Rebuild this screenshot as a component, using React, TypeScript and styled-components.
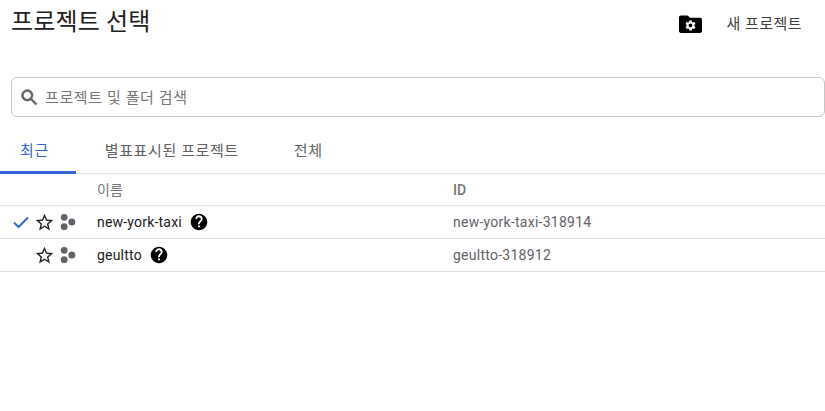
import React from "react";
import styled, { createGlobalStyle } from "styled-components";

const Global = createGlobalStyle`
  html, body { margin: 0; padding: 0; background: #fff; }
  body { font-family: Roboto, "Noto Sans CJK KR", sans-serif; overflow: hidden; }
`;

const Page = styled.div`
  width: 825px;
  height: 411px;
  display: flex;
  flex-direction: column;
  overflow: hidden;
`;

const Header = styled.header`
  height: 77px;
  display: flex;
  align-items: flex-start;
  justify-content: space-between;
  padding: 0 23px 0 11px;
`;

const Title = styled.h1`
  margin: 6px 0 0;
  font-size: 24px;
  line-height: 32px;
  font-weight: 400;
  letter-spacing: 0.15px;
  color: #202124;
`;

const Actions = styled.div`
  display: flex;
  align-items: center;
  height: 48px;
  color: #202124;
`;

const NewProject = styled.span`
  margin-left: 25px;
  padding-bottom: 3px;
  font-size: 15px;
  letter-spacing: 0.45px;
  color: #3c4043;
`;

const Search = styled.div`
  height: 38px;
  margin: 0 0 0 11px;
  display: flex;
  align-items: center;
  gap: 5px;
  padding-left: 7px;
  border: 1px solid #c6c6c6;
  border-radius: 6px;
  color: #757575;
`;

const Placeholder = styled.span`
  padding-bottom: 2px;
  font-size: 15px;
  letter-spacing: 0.6px;
`;

const Tabs = styled.nav`
  margin-top: 17px;
  height: 39px;
  display: flex;
  border-bottom: 1px solid #e0e0e0;
`;

const Tab = styled.div<{ $active?: boolean; $left: number; $right: number }>`
  padding: 7px ${(p) => p.$right}px 0 ${(p) => p.$left}px;
  font-size: 15px;
  letter-spacing: 0.6px;
  line-height: 20px;
  box-sizing: border-box;
  height: 40px;
  color: ${(p) => (p.$active ? "#3367d6" : "#616161")};
  border-bottom: 3px solid ${(p) => (p.$active ? "#3367d6" : "transparent")};
`;

const Row = styled.div<{ $h: number }>`
  height: ${(p) => p.$h}px;
  display: grid;
  grid-template-columns: 97px 356px 1fr;
  align-items: center;
  border-bottom: 1px solid #e0e0e0;
  font-size: 14px;
  letter-spacing: 0.25px;
`;

const NameHead = styled.div`
  padding-bottom: 2px;
  font-size: 14px;
  letter-spacing: 0;
  color: #757575;
`;

const IdHead = styled.div`
  font-size: 14px;
  letter-spacing: 0;
  font-weight: 500;
  color: #757575;
`;

const IconCell = styled.div`
  display: flex;
  align-items: center;
  padding-left: 12px;
`;

const CheckSlot = styled.div`
  width: 18px;
  height: 18px;
  color: #3367d6;
  margin-right: 4px;
`;

const NameCell = styled.div`
  display: flex;
  align-items: center;
  gap: 8px;
  color: #202124;
  letter-spacing: 0.2px;
`;

const IdCell = styled.div`
  color: #5f6368;
`;

const Check = () => (
  <svg width="18" height="18" viewBox="0 0 18 18" fill="none" stroke="currentColor" strokeWidth="2">
    <path d="M2 9.5 L6.5 14 L16 4.5" />
  </svg>
);

const Star = () => (
  <svg width="21" height="21" viewBox="0 0 24 24" fill="#202124" style={{ marginRight: 5 }}>
    <path d="M22 9.24l-7.19-.62L12 2 9.19 8.63 2 9.24l5.46 4.73L5.82 21 12 17.27 18.18 21l-1.63-7.03L22 9.24zM12 15.4l-3.76 2.27 1-4.28-3.32-2.88 4.38-.38L12 6.1l1.71 4.04 4.38.38-3.32 2.88 1 4.28L12 15.4z" />
  </svg>
);

const Nodes = () => (
  <svg width="16" height="18" viewBox="0 0 16 18" fill="#5f6368">
    <circle cx="4.2" cy="4.3" r="3.4" />
    <circle cx="4.2" cy="13.7" r="3.4" />
    <circle cx="11.8" cy="8.9" r="3.5" />
  </svg>
);

const Help = () => (
  <svg width="18" height="18" viewBox="0 0 24 24" fill="#000">
    <path d="M12 1C5.900 1 1 5.900 1 12s4.900 11 11 11 11-4.900 11-11S18.100 1 12 1zm1.200 18h-2.500v-2.500h2.500V19zm2.500-8.300l-1.100 1.100c-.9.900-1.400 1.600-1.400 3.200h-2.500v-.6c0-1.200.5-2.300 1.400-3.200l1.500-1.500c.4-.4.700-1 .7-1.700 0-1.300-1.100-2.400-2.400-2.400S9.500 6.700 9.500 8H7.100c0-2.700 2.200-4.900 4.900-4.900s4.900 2.200 4.900 4.900c0 1.100-.5 2-1.200 2.700z" />
  </svg>
);

const FolderGear = () => (
  <svg width="23" height="18" viewBox="0 0 24 19" preserveAspectRatio="none">
    <path d="M2 0.500h7l2.600 2.500H22c1.100 0 2 .9 2 2v12c0 1.100-.9 2-2 2H2c-1.100 0-2-.9-2-2V2.500C0 1.400.9.500 2 .500z" fill="#000" />
    <g transform="translate(5.400 4.400) scale(0.55)">
      <path
        fill="#fff"
        d="M19.140 12.940c.04-.3.06-.61.06-.94 0-.32-.02-.64-.07-.94l2.030-1.580c.18-.14.23-.41.12-.61l-1.920-3.320c-.12-.22-.37-.29-.59-.22l-2.390.96c-.5-.38-1.030-.7-1.620-.94l-.36-2.540c-.04-.24-.24-.41-.48-.41h-3.840c-.24 0-.43.17-.47.41l-.36 2.540c-.59.24-1.130.57-1.620.94l-2.390-.96c-.22-.08-.47 0-.59.22L2.740 8.870c-.12.21-.08.47.12.61l2.030 1.580c-.05.3-.09.63-.09.94s.02.64.07.94l-2.030 1.580c-.18.14-.23.41-.12.61l1.920 3.320c.12.22.37.29.59.22l2.390-.96c.5.38 1.030.7 1.620.94l.36 2.540c.05.24.24.41.48.41h3.840c.24 0 .44-.17.47-.41l.36-2.540c.59-.24 1.130-.56 1.620-.94l2.390.96c.22.08.47 0 .59-.22l1.920-3.320c.12-.22.07-.47-.12-.61l-2.010-1.580zM12 15.600c-1.980 0-3.600-1.620-3.600-3.600s1.620-3.600 3.600-3.600 3.600 1.620 3.600 3.600-1.620 3.600-3.600 3.600z"
      />
    </g>
  </svg>
);

const SearchIcon = () => (
  <svg width="21" height="21" viewBox="0 0 24 24" fill="#616161" stroke="#616161" strokeWidth="0.8">
    <path d="M15.500 14h-.79l-.28-.27C15.410 12.590 16 11.110 16 9.500 16 5.910 13.090 3 9.500 3S3 5.910 3 9.500 5.910 16 9.500 16c1.610 0 3.090-.59 4.230-1.570l.27.28v.79l5 4.990L20.490 19l-4.990-5zm-6 0C7.010 14 5 11.990 5 9.500S7.010 5 9.500 5 14 7.010 14 9.500 11.990 14 9.500 14z" />
  </svg>
);

const projects = [
  { name: "new-york-taxi", id: "new-york-taxi-318914", current: true },
  { name: "geultto", id: "geultto-318912", current: false },
];

export default function App() {
  return (
    <Page>
      <Global />
      <Header>
        <Title>프로젝트 선택</Title>
        <Actions>
          <FolderGear />
          <NewProject>새 프로젝트</NewProject>
        </Actions>
      </Header>
      <Search>
        <SearchIcon />
        <Placeholder>프로젝트 및 폴더 검색</Placeholder>
      </Search>
      <Tabs>
        <Tab $active $left={20} $right={27}>최근</Tab>
        <Tab $left={29} $right={27}>별표표시된 프로젝트</Tab>
        <Tab $left={28} $right={28}>전체</Tab>
      </Tabs>
      <Row $h={31}>
        <div />
        <NameHead>이름</NameHead>
        <IdHead>ID</IdHead>
      </Row>
      {projects.map((p) => (
        <Row $h={32} key={p.id}>
          <IconCell>
            <CheckSlot>{p.current && <Check />}</CheckSlot>
            <Star />
            <Nodes />
          </IconCell>
          <NameCell>
            {p.name}
            <Help />
          </NameCell>
          <IdCell>{p.id}</IdCell>
        </Row>
      ))}
    </Page>
  );
}
